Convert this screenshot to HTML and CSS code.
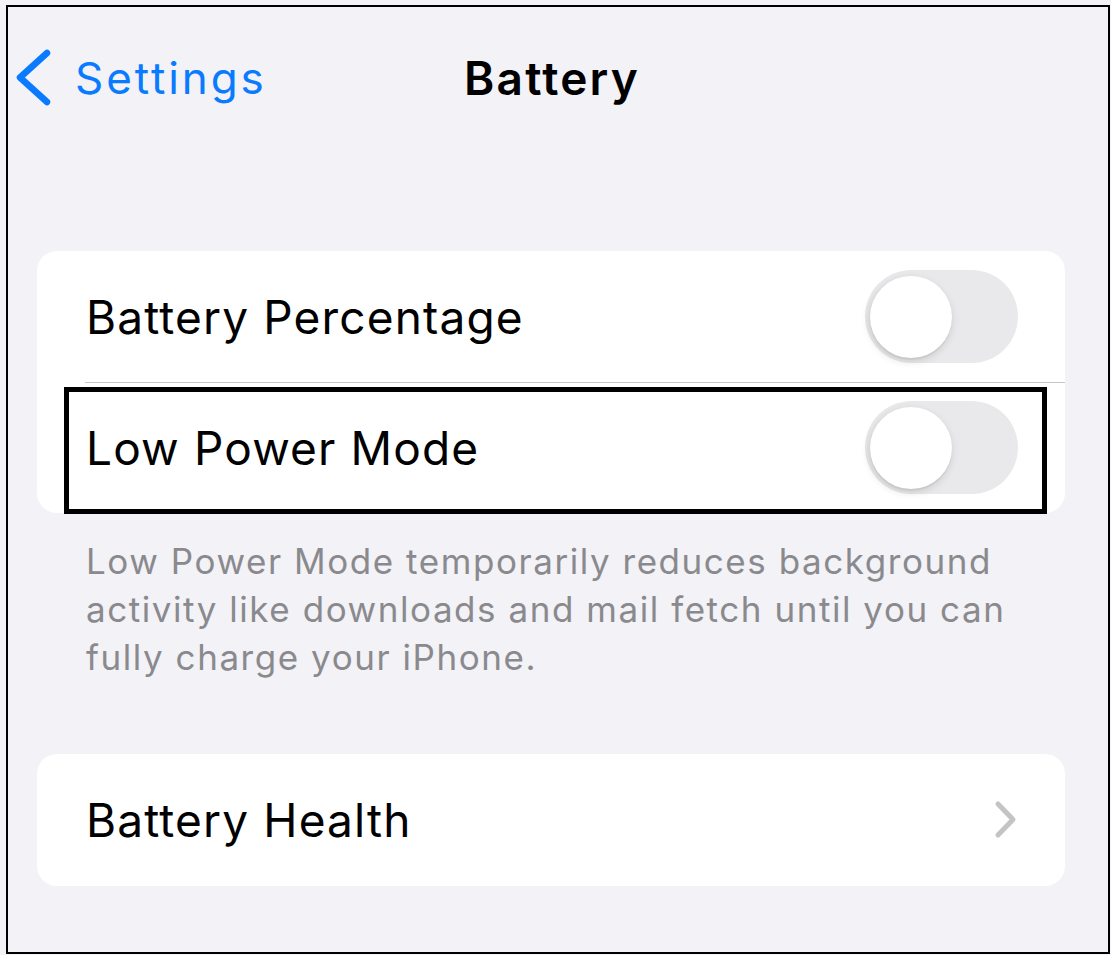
FILE: index.html
```html
<!DOCTYPE html>
<html>

<head>
    <title>Battery</title>
    <meta charset="utf-8">
    <meta name="viewport" content="width=device-width, initial-scale=1.0">
    <link rel="stylesheet" href="styles.css">
</head>

<body>
    <div class="screen">
        <div class="navbar">
            <a class="back" href="#">
                <svg class="back-icon" width="40" height="60" viewBox="0 0 40 60">
                    <polyline points="33,5 6,29.5 33,54" fill="none" stroke="#0a7aff" stroke-width="6.5"
                        stroke-linecap="round" stroke-linejoin="round" />
                </svg>
                <span>Settings</span>
            </a>
            <h1 class="title">Battery</h1>
            <div></div>
        </div>

        <div class="content">
            <div class="group">
                <div class="row">
                    <span class="label">Battery Percentage</span>
                    <span class="switch"><span class="knob"></span></span>
                </div>
                <div class="row row-marked">
                    <span class="label">Low Power Mode</span>
                    <span class="switch"><span class="knob"></span></span>
                    <span class="mark"></span>
                </div>
            </div>

            <p class="footnote">Low Power Mode temporarily reduces background activity like downloads and mail fetch until you can fully charge your iPhone.</p>

            <div class="group group-health">
                <div class="row">
                    <span class="label">Battery Health</span>
                    <svg class="chevron" width="24" height="40" viewBox="0 0 24 40">
                        <polyline points="4,4 19,19.5 4,35" fill="none" stroke="#c4c4c7" stroke-width="5"
                            stroke-linecap="round" stroke-linejoin="round" />
                    </svg>
                </div>
            </div>
        </div>
    </div>
</body>

</html>
```

FILE: styles.css
```css
body {
    margin: 0;
    background-color: #f2f2f7;
    font-family: Inter, "Noto Sans", sans-serif;
}

.screen {
    box-sizing: border-box;
    width: 1104px;
    height: 949px;
    margin: 5px 0 0 6px;
    border: 2px solid #000;
    background-color: #f2f2f7;
}

.navbar {
    display: grid;
    grid-template-columns: 1fr auto 1fr;
    align-items: center;
    height: 142px;
    padding: 0 18px 0 6px;
}

.back {
    display: flex;
    align-items: center;
    gap: 21px;
    color: #0a7aff;
    text-decoration: none;
    font-size: 44px;
    letter-spacing: 2.9px;
    line-height: 1;
}

.back-icon {
    display: block;
}

.title {
    margin: 0;
    font-size: 46px;
    font-weight: 600;
    letter-spacing: 2.2px;
    line-height: 1;
    color: #000;
}

.content {
    padding: 102px 43px 0 29px;
}

.group {
    background-color: #fff;
    border-radius: 20px;
}

.row {
    position: relative;
    display: flex;
    align-items: center;
    justify-content: space-between;
    height: 131px;
    padding: 0 47px 0 49px;
}

.row + .row::before {
    content: "";
    position: absolute;
    top: 0;
    left: 48px;
    right: 0;
    border-top: 1px solid #c6c6c8;
}

.label {
    font-size: 46px;
    letter-spacing: 1.15px;
    line-height: 1;
    color: #000;
}

.switch {
    display: flex;
    align-items: center;
    box-sizing: border-box;
    width: 153px;
    height: 93px;
    padding: 0 5px;
    border-radius: 47px;
    background-color: #e9e9eb;
}

.knob {
    width: 82px;
    height: 82px;
    border-radius: 50%;
    background-color: #fff;
    box-shadow: -1px 3px 8px rgba(0, 0, 0, 0.14), 0 2px 1px rgba(0, 0, 0, 0.05);
}

/* highlight frame drawn over the second row */
.mark {
    position: absolute;
    top: 5px;
    left: 27px;
    right: 18px;
    bottom: -1px;
    border: 5px solid #000;
}

.footnote {
    margin: 24px 0 0;
    padding: 0 40px 0 49px;
    font-size: 35px;
    letter-spacing: 1.55px;
    line-height: 48px;
    color: #8a8a8e;
}

.group-health {
    margin-top: 73px;
}

.group-health .row {
    height: 132px;
    padding-right: 47px;
}

.chevron {
    display: block;
}
```
